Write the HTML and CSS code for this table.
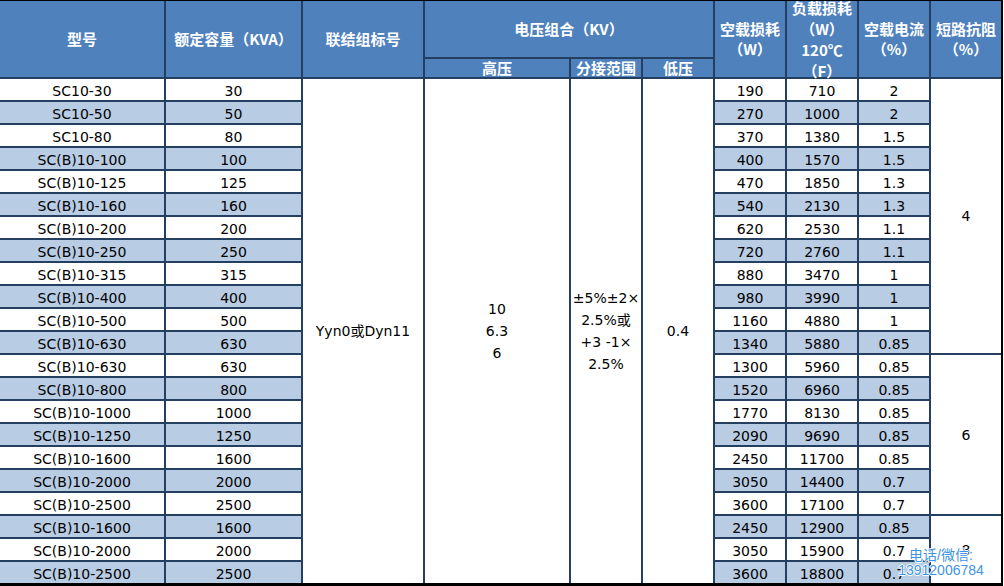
FILE: index.html
```html
<!DOCTYPE html>
<html lang="zh-CN">
<head>
<meta charset="utf-8">
<title>SC10 干式变压器参数表</title>
<link rel="stylesheet" href="styles.css">
</head>
<body>
<div class="sheet">
  <div class="hd h-model">型号</div>
  <div class="hd h-cap">额定容量（KVA）</div>
  <div class="hd h-group">联结组标号</div>
  <div class="hd h-volt">电压组合（KV）</div>
  <div class="hd h-hv">高压</div>
  <div class="hd h-tap">分接范围</div>
  <div class="hd h-lv">低压</div>
  <div class="hd h-c7">空载损耗<br>（W）</div>
  <div class="hd h-c8 tight">负载损耗<br>（W）<br>120℃<br>（F）</div>
  <div class="hd h-c9">空载电流<br>（%）</div>
  <div class="hd h-c10">短路抗阻<br>（%）</div>

  <div class="cell merged m-group">Yyn0或Dyn11</div>
  <div class="cell merged m-hv">10<br>6.3<br>6</div>
  <div class="cell merged m-tap">±5%±2×<br>2.5%或<br>+3 -1×<br>2.5%</div>
  <div class="cell merged m-lv">0.4</div>
  <div class="cell merged m-z1">4</div>
  <div class="cell merged m-z2">6</div>
  <div class="cell merged m-z3">8</div>

  <div class="row"><div class="cell">SC10-30</div><div class="cell">30</div><div class="cell">190</div><div class="cell">710</div><div class="cell">2</div></div>
  <div class="row alt"><div class="cell">SC10-50</div><div class="cell">50</div><div class="cell">270</div><div class="cell">1000</div><div class="cell">2</div></div>
  <div class="row"><div class="cell">SC10-80</div><div class="cell">80</div><div class="cell">370</div><div class="cell">1380</div><div class="cell">1.5</div></div>
  <div class="row alt"><div class="cell">SC(B)10-100</div><div class="cell">100</div><div class="cell">400</div><div class="cell">1570</div><div class="cell">1.5</div></div>
  <div class="row"><div class="cell">SC(B)10-125</div><div class="cell">125</div><div class="cell">470</div><div class="cell">1850</div><div class="cell">1.3</div></div>
  <div class="row alt"><div class="cell">SC(B)10-160</div><div class="cell">160</div><div class="cell">540</div><div class="cell">2130</div><div class="cell">1.3</div></div>
  <div class="row"><div class="cell">SC(B)10-200</div><div class="cell">200</div><div class="cell">620</div><div class="cell">2530</div><div class="cell">1.1</div></div>
  <div class="row alt"><div class="cell">SC(B)10-250</div><div class="cell">250</div><div class="cell">720</div><div class="cell">2760</div><div class="cell">1.1</div></div>
  <div class="row"><div class="cell">SC(B)10-315</div><div class="cell">315</div><div class="cell">880</div><div class="cell">3470</div><div class="cell">1</div></div>
  <div class="row alt"><div class="cell">SC(B)10-400</div><div class="cell">400</div><div class="cell">980</div><div class="cell">3990</div><div class="cell">1</div></div>
  <div class="row"><div class="cell">SC(B)10-500</div><div class="cell">500</div><div class="cell">1160</div><div class="cell">4880</div><div class="cell">1</div></div>
  <div class="row alt"><div class="cell">SC(B)10-630</div><div class="cell">630</div><div class="cell">1340</div><div class="cell">5880</div><div class="cell">0.85</div></div>
  <div class="row"><div class="cell">SC(B)10-630</div><div class="cell">630</div><div class="cell">1300</div><div class="cell">5960</div><div class="cell">0.85</div></div>
  <div class="row alt"><div class="cell">SC(B)10-800</div><div class="cell">800</div><div class="cell">1520</div><div class="cell">6960</div><div class="cell">0.85</div></div>
  <div class="row"><div class="cell">SC(B)10-1000</div><div class="cell">1000</div><div class="cell">1770</div><div class="cell">8130</div><div class="cell">0.85</div></div>
  <div class="row alt"><div class="cell">SC(B)10-1250</div><div class="cell">1250</div><div class="cell">2090</div><div class="cell">9690</div><div class="cell">0.85</div></div>
  <div class="row"><div class="cell">SC(B)10-1600</div><div class="cell">1600</div><div class="cell">2450</div><div class="cell">11700</div><div class="cell">0.85</div></div>
  <div class="row alt"><div class="cell">SC(B)10-2000</div><div class="cell">2000</div><div class="cell">3050</div><div class="cell">14400</div><div class="cell">0.7</div></div>
  <div class="row"><div class="cell">SC(B)10-2500</div><div class="cell">2500</div><div class="cell">3600</div><div class="cell">17100</div><div class="cell">0.7</div></div>
  <div class="row alt"><div class="cell">SC(B)10-1600</div><div class="cell">1600</div><div class="cell">2450</div><div class="cell">12900</div><div class="cell">0.85</div></div>
  <div class="row"><div class="cell">SC(B)10-2000</div><div class="cell">2000</div><div class="cell">3050</div><div class="cell">15900</div><div class="cell">0.7</div></div>
  <div class="row alt"><div class="cell">SC(B)10-2500</div><div class="cell">2500</div><div class="cell">3600</div><div class="cell">18800</div><div class="cell">0.7</div></div>
</div>
<div class="watermark">电话/微信:<br>13912006784</div>
</body>
</html>
```

FILE: styles.css
```css
html, body {
  margin: 0;
  padding: 0;
  background: #ffffff;
}

body {
  position: relative;
  width: 1004px;
  height: 586px;
  overflow: hidden;
}

.sheet {
  display: grid;
  grid-template-columns: 164px 135px 120px 144px 70px 70px 70px 70px 70px 70px;
  grid-template-rows: 56px 18px repeat(22, 21px);
  gap: 2px;
  width: 1001px;
  background: #243f60;
  border-top: 1px solid #000;
  border-right: 2px solid #000;
  border-bottom: 3px solid #000;
}

.row {
  display: contents;
}

.hd,
.cell {
  display: flex;
  flex-direction: column;
  align-items: center;
  justify-content: center;
  text-align: center;
  min-height: 0;
  min-width: 0;
  box-sizing: border-box;
}

.hd {
  background: #4f81bd;
  color: #ffffff;
  font-family: "Noto Sans CJK SC", "DejaVu Sans", sans-serif;
  font-weight: bold;
  font-size: 15px;
  line-height: 20px;
  text-spacing-trim: space-all;
}

.hd.tight {
  line-height: 21px;
}

.cell {
  background: #ffffff;
  color: #000000;
  font-family: "DejaVu Sans", "Noto Sans CJK SC", sans-serif;
  font-size: 14px;
  line-height: 21px;
}

.row > .cell {
  padding-top: 3px;
}

.row.alt > .cell {
  background: #b8cce4;
}

.merged {
  line-height: 22px;
}

.h-model { grid-column: 1; grid-row: 1 / 3; }
.h-cap   { grid-column: 2; grid-row: 1 / 3; }
.h-group { grid-column: 3; grid-row: 1 / 3; }
.h-volt  { grid-column: 4 / 7; grid-row: 1; }
.h-hv    { grid-column: 4; grid-row: 2; }
.h-tap   { grid-column: 5; grid-row: 2; }
.h-lv    { grid-column: 6; grid-row: 2; }
.h-c7    { grid-column: 7; grid-row: 1 / 3; }
.h-c8    { grid-column: 8; grid-row: 1 / 3; }
.h-c9    { grid-column: 9; grid-row: 1 / 3; }
.h-c10   { grid-column: 10; grid-row: 1 / 3; }

.m-group { grid-column: 3; grid-row: 3 / 25; }
.m-hv    { grid-column: 4; grid-row: 3 / 25; }
.m-tap   { grid-column: 5; grid-row: 3 / 25; }
.m-lv    { grid-column: 6; grid-row: 3 / 25; }
.m-z1    { grid-column: 10; grid-row: 3 / 15; }
.m-z2    { grid-column: 10; grid-row: 15 / 22; }
.m-z3    { grid-column: 10; grid-row: 22 / 25; }

.watermark {
  position: absolute;
  left: 894px;
  top: 548px;
  width: 94px;
  text-align: center;
  font-family: "Liberation Sans", "Noto Sans CJK SC", sans-serif;
  font-size: 14px;
  line-height: 15px;
  color: #3f95e4;
  text-shadow: 0 0 1px #fff, 0 0 1px #fff, 1px 0 0 #fff, -1px 0 0 #fff, 0 1px 0 #fff, 0 -1px 0 #fff;
}
```
